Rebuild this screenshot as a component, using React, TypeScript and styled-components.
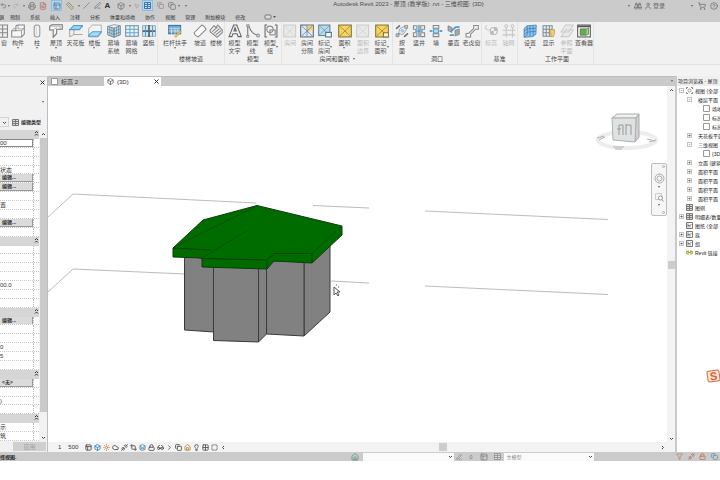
import React from "react";
import styled, { createGlobalStyle, css } from "styled-components";
import {
  Binoculars, Box as BoxIcon, Cloud, FileText, Filter, Glasses, Home, Lightbulb, Link2,
  PenLine, Printer, Redo2, Ruler, ShoppingCart, Sun, Undo2, User, CircleHelp, Copy,
  PanelsTopLeft, SquareDashed, Crop, Layers, Grid2x2, Lock, Unplug, MousePointer2, Slash, ChevronRight,
} from "lucide-react";

const Global = createGlobalStyle`
  * { box-sizing: border-box; }
  body {
    margin: 0;
    background: #fff;
    overflow: hidden;
    color: #333;
    font-family: "Liberation Sans", "Noto Sans CJK SC", sans-serif;
    font-size: 6px;
    line-height: 8px;
  }
  button, input, select {
    font: inherit;
    color: inherit;
    border: 0;
    padding: 0;
    margin: 0;
    background: none;
    border-radius: 0;
  }
  ul { list-style: none; margin: 0; padding: 0; }
  svg { display: block; flex: none; }
`;

const Shell = styled.div`
  display: flex;
  flex-direction: column;
  height: calc(100vh - 19px);
  min-height: 300px;
  position: relative;
  overflow: hidden;
`;

/* ---------- title bar and tabs ---------- */

const Header = styled.header`
  background: #cbcbcb;
  flex: none;
`;
const TitleRow = styled.div`
  display: flex;
  align-items: flex-start;
  height: 12px;
`;
const QuickBar = styled.div`
  display: flex;
  height: 11px;
`;
const Quick = styled.button<{ $w: number; $on?: boolean }>`
  width: ${(p) => p.$w}px;
  height: 11px;
  display: flex;
  align-items: center;
  justify-content: center;
  color: #666;
  ${(p) => p.$on && css`background: #b3d6ef; box-shadow: inset 0 0 0 1px #8fbbdc; color: #46688c;`}
`;
const BigA = styled.span`
  font-size: 8px;
  font-weight: 700;
  color: #333;
`;
const Title = styled.h1`
  flex: 1;
  margin: 0;
  text-align: center;
  font-size: 6px;
  line-height: 8px;
  font-weight: 400;
  color: #505050;
  white-space: nowrap;
`;
const Tabs = styled.nav`
  display: flex;
  align-items: center;
  height: 10px;
`;
const Tab = styled.button<{ $cut?: boolean }>`
  padding: 0 ${(p) => (p.$cut ? 1 : 5)}px 0 ${(p) => (p.$cut ? 0 : 5)}px;
  margin-left: ${(p) => (p.$cut ? -1 : 0)}px;
  font-size: 5px;
  white-space: nowrap;
  color: #333;
`;

/* ---------- ribbon ---------- */

const Ribbon = styled.div`
  display: flex;
  flex: none;
  height: 43px;
  background: #f1f1f1;
  border-bottom: 1px solid #e2e2e2;
`;
const Group = styled.section<{ $lead?: number }>`
  display: flex;
  flex-direction: column;
  justify-content: space-between;
  padding: 2px 0 1px ${(p) => p.$lead ?? 0}px;
  border-right: 1px solid #e4e4e4;
`;
const Tools = styled.div`
  display: flex;
  align-items: flex-start;
`;
const ToolButton = styled.button<{ $w: number }>`
  width: ${(p) => p.$w}px;
  display: flex;
  flex-direction: column;
  align-items: center;
  gap: 1px;
  line-height: 8px;
  white-space: nowrap;
  color: #505050;
  &:disabled { color: #bbb; }
  &:disabled svg { opacity: 0.35; }
`;
const ToolLabel = styled.span<{ $side?: boolean }>`
  display: flex;
  flex-direction: ${(p) => (p.$side ? "row" : "column")};
  align-items: center;
  white-space: pre-line;
  width: max-content;
`;
const Caret = styled.i`
  width: 0;
  border: 1px solid transparent;
  border-top: 2px solid #666;
  border-bottom: 0;
  flex: none;
`;
const GroupName = styled.div<{ $shift?: number }>`
  display: flex;
  align-items: center;
  justify-content: center;
  gap: 3px;
  height: 8px;
  padding-right: ${(p) => p.$shift ?? 0}px;
  color: #444;
  white-space: nowrap;
`;
const Options = styled.div`
  flex: none;
  height: 11px;
  background: #f3f3f3;
`;

/* ---------- workspace ---------- */

const Work = styled.main`
  flex: 1;
  min-height: 0;
  display: flex;
`;
const Properties = styled.aside`
  flex: none;
  width: 48px;
  display: flex;
  flex-direction: column;
  background: #f1f1f1;
  border-top: 1px solid #d4d4d4;
  border-right: 1px solid #bdbdbd;
`;
const PanelTop = styled.div`
  display: flex;
  flex-direction: column;
  justify-content: space-between;
  align-items: flex-end;
  height: 30px;
  padding: 1px 1px 1px 0;
`;
const Small = styled.button`
  width: 7px;
  height: 8px;
  display: flex;
  align-items: center;
  justify-content: center;
  color: #444;
`;
const TypeRow = styled.div`
  display: flex;
  align-items: center;
  height: 23px;
  gap: 3px;
  padding: 10px 4px 3px 0;
`;
const TypeDrop = styled.button`
  width: 9px;
  height: 10px;
  border: 1px solid #d5d5d5;
  border-left: 0;
  display: flex;
  align-items: center;
  justify-content: center;
`;
const EditType = styled.button`
  display: flex;
  align-items: center;
  gap: 2px;
  font-size: 5px;
  font-weight: 700;
  white-space: nowrap;
`;
const PropArea = styled.div`
  flex: 1;
  min-height: 0;
  display: flex;
`;
const PropList = styled.div`
  flex: 1;
  min-width: 0;
  display: grid;
  grid-auto-rows: 1fr;
  background: #fff;
`;
const PropRow = styled.div<{ $head?: boolean }>`
  display: grid;
  grid-template-columns: 34px 1fr;
  min-height: 0;
  overflow: hidden;
  white-space: nowrap;
  border-bottom: 1px ${(p) => (p.$head ? "solid #d4d4d4" : "dotted #c8c8c8")};
  ${(p) => p.$head && css`background: #d6d6d6;`}
`;
const Cell = styled.div<{ $head?: boolean }>`
  display: flex;
  align-items: center;
  min-width: 0;
  ${(p) => !p.$head && css`border-right: 1px dotted #bbb;`}
`;
const CellButton = styled.button`
  flex: 1;
  text-align: left;
  padding-left: 2px;
  background: #dadada;
  border: solid #999;
  border-width: 0 1px 1px 0;
  font-size: 5px;
  font-weight: 700;
  line-height: 7px;
`;
const CellInput = styled.input`
  width: 100%;
  height: 8px;
  border: 1px solid #888;
  border-left: 0;
`;
const VScroll = styled.div<{ $track: string }>`
  flex: none;
  width: 8px;
  display: flex;
  flex-direction: column;
  align-items: center;
  background: ${(p) => p.$track};
`;
const Thumb = styled.div<{ $grow: number; $shade: string }>`
  flex: ${(p) => p.$grow} 1 0;
  width: 7px;
  background: ${(p) => p.$shade};
`;
const Apply = styled.button`
  align-self: flex-end;
  width: 33px;
  height: 9px;
  margin: 1px 1px 1px 0;
  background: #cfcfcf;
  &:disabled { color: #a0a0a0; }
`;

const Center = styled.section`
  flex: 1;
  min-width: 0;
  display: flex;
  flex-direction: column;
`;
const DocTabs = styled.div`
  flex: none;
  display: flex;
  align-items: stretch;
  height: 10px;
  background: #cacaca;
  border-top: 1px solid #bdbdbd;
`;
const DocTab = styled.div<{ $on?: boolean }>`
  display: flex;
  align-items: center;
  gap: 3px;
  width: ${(p) => (p.$on ? 57 : 56)}px;
  padding: 0 1px 0 3px;
  background: ${(p) => (p.$on ? "#fff" : "#c6c6c6")};
`;
const DocName = styled.button`
  flex: 1;
  text-align: left;
  white-space: nowrap;
`;
const Spacer = styled.div`
  flex: 1;
`;
const ViewRow = styled.div`
  flex: 1;
  min-height: 0;
  display: flex;
`;
const Viewport = styled.div`
  flex: 1;
  min-width: 0;
  position: relative;
  overflow: hidden;
  background: #fff;
`;
const Cube = styled.div`
  position: absolute;
  top: 24px;
  right: 7px;
`;
const NavBar = styled.div`
  position: absolute;
  top: 77px;
  right: 0;
  width: 16px;
  height: 53px;
  border: 1px solid #bdbdbd;
  border-radius: 2px;
  background: #f6f6f6;
  display: flex;
  flex-direction: column;
  align-items: center;
  justify-content: space-between;
  color: #aaa;
`;
const NavButton = styled.button`
  display: flex;
  flex-direction: column;
  align-items: center;
  gap: 2px;
`;
const NavDot = styled.button`
  align-self: flex-end;
  width: 3px;
  height: 3px;
  margin: 1px;
  border: 1px solid #aaa;
  border-radius: 50%;
`;
const ViewBar = styled.div`
  flex: none;
  display: flex;
  align-items: center;
  height: 10px;
  background: #f3f3f3;
  padding-right: 8px;
`;
const Scale = styled.button`
  display: flex;
  gap: 7px;
  width: 36px;
  padding-left: 10px;
  white-space: nowrap;
`;
const ViewTool = styled.button<{ $c?: string }>`
  width: 9px;
  height: 9px;
  display: flex;
  align-items: center;
  justify-content: center;
  color: ${(p) => p.$c ?? "#555"};
`;
const HTrack = styled.div`
  flex: 1;
  display: flex;
`;
const HThumb = styled.div`
  width: 8px;
  height: 8px;
  background: #cdcdcd;
`;

/* ---------- project browser ---------- */

const Browser = styled.aside`
  flex: none;
  width: 45px;
  overflow: hidden;
  border-left: 2px solid #c9c9c9;
  background: #fff;
  white-space: nowrap;
`;
const BrowserTitle = styled.h2`
  margin: 0;
  padding-left: 1px;
  height: 10px;
  font-size: 5px;
  line-height: 10px;
  font-weight: 400;
  background: #efefef;
`;
const Node = styled.li<{ $depth: number }>`
  display: flex;
  align-items: center;
  gap: 2px;
  height: 9px;
  font-size: 5px;
  color: #222;
  padding-left: ${(p) => [2, 10, 26][p.$depth]}px;
`;
const Toggle = styled.button`
  width: 5px;
  height: 5px;
  border: 1px solid #c4c4c4;
  font-size: 5px;
  line-height: 3px;
  flex: none;
`;
const Blank = styled.span<{ $w: number }>`
  width: ${(p) => p.$w}px;
  flex: none;
`;

/* ---------- status bar ---------- */

const Status = styled.footer`
  flex: none;
  display: flex;
  align-items: center;
  height: 9px;
  background: #cbcbcb;
  font-size: 5px;
`;
const StatusText = styled.span`
  flex: 349 1 0;
  min-width: 0;
  color: #222;
  font-weight: 700;
`;
const SelectBox = styled.label`
  flex: 90 1 0;
  min-width: 0;
  height: 8px;
  display: flex;
  align-items: center;
  background: #fafafa;
  padding-right: 1px;
`;
const StatusSelect = styled.select`
  flex: 1;
  min-width: 0;
  height: 8px;
  color: #888;
  appearance: none;
  padding-left: 3px;
`;
const StatusIcon = styled.button<{ $w: number; $c?: string }>`
  width: ${(p) => p.$w}px;
  display: flex;
  align-items: center;
  justify-content: center;
  color: ${(p) => p.$c ?? "#777"};
`;
const StatusGap = styled.span`
  flex: 79 1 0;
`;
const InputBadge = styled.button`
  position: absolute;
  right: 0;
  bottom: 79px;
  width: 13px;
  height: 12px;
  border-radius: 2px;
  border: 1px solid #d96a3c;
  background: #fbe6dc;
  color: #dd5f2d;
  font-size: 11px;
  line-height: 10px;
  font-weight: 700;
  transform: rotate(-8deg);
`;

/* ---------- icons ---------- */

const G = "#888";
const B = "#4d9fd0";
const Y = "#f7d45c";
const boxX = (
  <>
    <rect x="2" y="3" width="36" height="34" fill={Y} stroke="#7d7340" strokeWidth="3" />
    <path d="M4 5 36 35M36 5 4 35" stroke="#8a7d3a" strokeWidth="2" />
  </>
);
const art: Record<string, React.ReactNode> = {
  window: <path d="M2 3H30V38H2ZM2 14H30M2 25H30M16 3V38" fill="#eee" stroke={G} strokeWidth="3" />,
  component: <><path d="M2 19H14V8Q14 3 20 3H38V29L30 37H2Z" fill="#f6f6f6" stroke={G} strokeWidth="3" /><path d="M2 19 8 13H14M14 19H30V37M30 19 38 12M20 3V14H38" fill="none" stroke={G} strokeWidth="2" /></>,
  column: <><rect x="12" y="3" width="16" height="34" rx="7" fill="#f3f3f3" stroke="#999" strokeWidth="3" /><path d="M18 7V33" stroke="#ccc" strokeWidth="2" /></>,
  roof: <><path d="M2 6 8 2H38V15H22V27L12 38V17H2Z" fill="#f6f6f6" stroke="#777" strokeWidth="3" /><path d="M2 6H32V15M12 17 22 10" fill="none" stroke="#999" strokeWidth="2" /></>,
  ceiling: <><path d="M2 16 14 4H39L30 16Z" fill="#9bd0ee" stroke={B} strokeWidth="3" /><path d="M2 16V37M14 16V30H39M2 37 14 30M39 6V10" fill="none" stroke={G} strokeWidth="2" /></>,
  floor: <><path d="M12 3H38V26L28 37H2V14Z" fill="#f4f4f4" stroke="#999" strokeWidth="2" /><path d="M2 32 13 22H38L28 35H2Z" fill="#a6dbf5" stroke={B} strokeWidth="3" /></>,
  curtain: <><path d="M2 7 20 12V38L2 31ZM20 12 38 5V31L20 38Z" fill="#c4e4f5" stroke="#667f8e" strokeWidth="2.5" /><path d="M2 15 20 21 38 14M2 23 20 30 38 23M8 9V33M14 10V35M27 9V35M33 7V33M2 7 20 2 38 5" fill="none" stroke="#667f8e" strokeWidth="2" /></>,
  grid: <><rect x="2" y="5" width="36" height="30" fill="#e8f4fa" stroke="#7a8b94" strokeWidth="3" /><path d="M14 5V35M26 5V35M2 15H38M2 25H38" stroke={B} strokeWidth="2.5" /></>,
  mullion: <><rect x="2" y="5" width="36" height="30" fill="#cfe8f5" stroke="#7a8b94" strokeWidth="2" /><path d="M20 3V37M2 20H38" stroke="#58646b" strokeWidth="5" /><path d="M10 5V35M30 5V35" stroke={B} strokeWidth="3" /></>,
  railing: <><rect x="2" y="4" width="34" height="24" fill="#6da9d3" stroke="#456f91" strokeWidth="3" /><path d="M2 12H36M2 20H36M10 12V32M20 12V32M28 12V28" stroke="#dceaf3" strokeWidth="2" /><path d="M18 36 35 19 39 23 23 38Z" fill="#e8c34c" stroke="#99824a" strokeWidth="1" /></>,
  ramp: <path d="M3 25 25 3Q36 8 37 16L15 37Q5 34 3 25Z" fill="#fafafa" stroke={G} strokeWidth="3" />,
  stair: <path d="M3 18 14 5 20 10 25 3 38 17V24L23 38 3 22ZM9 22 24 9M14 27 30 13M19 32 35 18" fill="#eee" stroke={G} strokeWidth="3" />,
  letter: <path d="M3 36 16 3H25L38 36H29L26 28H14L11 36ZM17 20H24L20 10Z" fill="#f3f3f3" stroke="#666" strokeWidth="3" />,
  curve: <><path d="M5 5V36M9 7Q15 29 36 33" fill="none" stroke="#777" strokeWidth="3" /><path d="M2 2H9V8H2ZM2 32H8V38H2ZM31 29H38V37H31Z" fill="#ddd" stroke="#777" strokeWidth="2" /></>,
  group: <><path d="M9 3H3V37H9M31 3H37V37H31" fill="none" stroke="#666" strokeWidth="3" /><circle cx="17" cy="15" r="9" fill="#f4f4f4" stroke={G} strokeWidth="3" /><rect x="17" y="17" width="15" height="14" fill="none" stroke={G} strokeWidth="3" /></>,
  room: <><rect x="2" y="3" width="34" height="34" fill="#ddd" stroke={G} strokeWidth="3" /><path d="M4 5 34 35M34 5 4 35" stroke={G} strokeWidth="2" /></>,
  separator: <><rect x="2" y="3" width="36" height="34" fill="#dce9f7" stroke="#62676d" strokeWidth="3" /><path d="M20 5H36V16L20 24Z" fill={Y} /><path d="M4 5 36 35M36 5 4 35M20 3V37" stroke="#6e8bb3" strokeWidth="2.5" /></>,
  tagRoom: <><rect x="2" y="3" width="32" height="30" fill="#b9dbef" stroke="#67808e" strokeWidth="3" /><path d="M3 4 34 32M34 4 3 32" stroke="#5b93b5" strokeWidth="2" /><rect x="22" y="24" width="16" height="13" fill="#fff" stroke="#47728e" strokeWidth="3" /></>,
  area: boxX,
  tagArea: <>{boxX}<rect x="24" y="25" width="15" height="12" fill="#fff3bd" stroke="#7d7340" strokeWidth="3" /></>,
  byFace: <><path d="M14 13 28 6 34 14 22 31 10 26Z" fill="#e4eaee" stroke={G} strokeWidth="2" /><path d="M3 14 14 4M26 37 37 27M5 34 12 28" stroke="#777" strokeWidth="5" /><path d="M28 4H36V12H28ZM3 28H11V36H3Z" fill="#ccc" stroke="#777" strokeWidth="2" /><circle cx="21" cy="19" r="5" fill="#9cc9e5" /></>,
  shaft: <><path d="M4 5V15H14V5ZM25 5V15H36V5ZM4 25V36H14V25ZM25 25V36H36V25Z" fill="#eee" stroke={G} strokeWidth="3" /><path d="M20 2V38M9 20H31" stroke={B} strokeWidth="4" /></>,
  wall: <><path d="M12 4H28V12H12ZM12 28H28V36H12Z" fill="#eee" stroke={G} strokeWidth="3" /><path d="M13 14H27V26H13Z" fill="#b7def5" stroke={B} strokeWidth="3" /><path d="M2 20H10M30 20H38" stroke="#4f83a7" strokeWidth="4" /></>,
  vertical: <><path d="M3 5 14 10V24L3 19ZM23 18 35 14V30L23 34Z" fill="#aaa" stroke="#777" strokeWidth="2" /><path d="M12 20 25 9 36 8M8 32H20" fill="none" stroke={B} strokeWidth="5" /></>,
  dormer: <path d="M3 37V27H10L25 13V4H38V15H30L16 29V37Z" fill="#f7f7f7" stroke={G} strokeWidth="3" />,
  level: <><path d="M2 12 12 17H24M8 4 3 12" fill="none" stroke={G} strokeWidth="3" /><circle cx="28" cy="20" r="10" fill="#fff" stroke="#555" strokeWidth="3" /><path d="M28 10V30H18V20H38V10Z" fill="#555" /></>,
  axes: <><path d="M12 9V38M30 9V38M2 18H38M2 31H38" stroke="#777" strokeWidth="3" /><circle cx="12" cy="6" r="4" fill="#fff" stroke="#777" strokeWidth="3" /><circle cx="30" cy="6" r="4" fill="#fff" stroke="#777" strokeWidth="3" /></>,
  plane: <path d="M3 13 12 5 38 3 37 29 28 36 3 38ZM3 21 12 14 37 12M3 30 12 23 37 21M12 5V31L3 38M20 5V36M29 4V35" fill="#8cc4ee" stroke="#3978ad" strokeWidth="2" />,
  show: <><path d="M3 5H29V35H3ZM3 15H29M3 25H29M12 5V35M21 5V35" fill="#eaf2f7" stroke="#7e8a91" strokeWidth="3" /><path d="M23 16H36V27L33 36H26V27H23Z" fill="#f4ce64" stroke="#bd9b48" strokeWidth="2" /></>,
  refPlane: <path d="M3 23 16 3H38L25 23ZM3 36 16 17H38L25 36Z" fill="#ddd" stroke={G} strokeWidth="3" />,
  viewer: <><rect x="2" y="3" width="36" height="34" fill="#fff" stroke="#555" strokeWidth="3" /><path d="M2 7H38" stroke="#555" strokeWidth="5" /><path d="M9 14H27V32H9Z" fill="#69a94f" stroke="#427337" strokeWidth="2" /><path d="M27 14 33 12V29L27 32" fill="#a7cf96" stroke="#427337" strokeWidth="2" /></>,
};
const RibbonIcon = ({ name }: { name: string }) => (
  <svg width="14" height="14" viewBox="0 0 40 40" aria-hidden="true">{art[name]}</svg>
);
const Chevron = ({ turn = 0 }: { turn?: number }) => (
  <svg width="5" height="5" viewBox="0 0 10 10" aria-hidden="true">
    <path d="M2 4 5 7 8 4" fill="none" stroke="#444" strokeWidth="2" transform={`rotate(${turn} 5 5)`} />
  </svg>
);
const Collapse = () => (
  <svg width="5" height="7" viewBox="0 0 10 14" aria-hidden="true">
    <path d="M2 6 5 3 8 6M2 11 5 8 8 11" fill="none" stroke="#333" strokeWidth="2" />
  </svg>
);
const Cross = () => (
  <svg width="5" height="5" viewBox="0 0 10 10" aria-hidden="true">
    <path d="M1 1 9 9M9 1 1 9" stroke="#333" strokeWidth="2" />
  </svg>
);
const Sheet = ({ tone = "#aaa" }: { tone?: string }) => (
  <svg width="7" height="7" viewBox="0 0 14 14" aria-hidden="true">
    <path d="M1 1H13V13H1Z" fill="#fff" stroke={tone} strokeWidth="2" />
  </svg>
);
const ViewMark = () => (
  <svg width="7" height="7" viewBox="0 0 14 14" aria-hidden="true">
    <path d="M1 4V1H4M10 1H13V4M13 10V13H10M4 13H1V10" fill="none" stroke="#888" strokeWidth="2" />
    <circle cx="7" cy="7" r="3" fill="none" stroke="#999" strokeWidth="2" />
  </svg>
);
const FamilyMark = () => (
  <svg width="7" height="7" viewBox="0 0 14 14" aria-hidden="true">
    <path d="M1 1H13V13H1Z" fill="#fff" stroke="#777" strokeWidth="2" />
    <path d="M4 3V11M4 7H8V11M8 7 11 4" fill="none" stroke="#777" strokeWidth="2" />
  </svg>
);
const TableMark = ({ tone = "#777" }: { tone?: string }) => (
  <svg width="7" height="7" viewBox="0 0 14 14" aria-hidden="true">
    <path d="M1 1H13V13H1ZM1 5H13M1 9H13M7 1V13" fill="#ddd" stroke={tone} strokeWidth="2" />
  </svg>
);

/* ---------- data ---------- */

type Tool = { w: number; icon: string; label: string; menu?: "below" | "side"; off?: boolean };
const groups: { name: string; lead?: number; shift?: number; menu?: boolean; tools: Tool[] }[] = [
  { name: "构建", shift: 45, tools: [
    { w: 8, icon: "window", label: "窗" },
    { w: 20, icon: "component", label: "构件", menu: "below" },
    { w: 18, icon: "column", label: "柱", menu: "below" },
    { w: 20, icon: "roof", label: "屋顶", menu: "below" },
    { w: 19, icon: "ceiling", label: "天花板" },
    { w: 19, icon: "floor", label: "楼板", menu: "below" },
    { w: 19, icon: "curtain", label: "幕墙\n系统" },
    { w: 17, icon: "grid", label: "幕墙\n网格" },
    { w: 17, icon: "mullion", label: "竖梃" },
  ] },
  { name: "楼梯坡道", tools: [
    { w: 34, icon: "railing", label: "栏杆扶手", menu: "below" },
    { w: 16, icon: "ramp", label: "坡道" },
    { w: 16, icon: "stair", label: "楼梯" },
  ] },
  { name: "模型", tools: [
    { w: 19, icon: "letter", label: "模型\n文字" },
    { w: 17, icon: "curve", label: "模型\n线" },
    { w: 20, icon: "group", label: "模型\n组", menu: "side" },
  ] },
  { name: "房间和面积", menu: true, tools: [
    { w: 16, icon: "room", label: "房间", off: true },
    { w: 18, icon: "separator", label: "房间\n分隔" },
    { w: 18, icon: "tagRoom", label: "标记\n房间", menu: "side" },
    { w: 21, icon: "area", label: "面积", menu: "below" },
    { w: 16, icon: "room", label: "面积\n边界", off: true },
    { w: 21, icon: "tagArea", label: "标记\n面积", menu: "side" },
  ] },
  { name: "洞口", tools: [
    { w: 18, icon: "byFace", label: "按\n面" },
    { w: 16, icon: "shaft", label: "竖井" },
    { w: 18, icon: "wall", label: "墙" },
    { w: 17, icon: "vertical", label: "垂直" },
    { w: 19, icon: "dormer", label: "老虎窗" },
  ] },
  { name: "基准", tools: [
    { w: 18, icon: "level", label: "标高", off: true },
    { w: 17, icon: "axes", label: "轴网", off: true },
  ] },
  { name: "工作平面", lead: 3, tools: [
    { w: 18, icon: "plane", label: "设置", menu: "below" },
    { w: 19, icon: "show", label: "显示" },
    { w: 17, icon: "refPlane", label: "参照\n平面", off: true },
    { w: 18, icon: "viewer", label: "查看器" },
  ] },
];

const tabs = ["预制", "系统", "插入", "注释", "分析", "体量和场地", "协作", "视图", "管理", "附加模块", "修改"];

type Prop = { kind?: "head" | "edit" | "none" | "input"; text?: string };
const properties: Prop[] = [
  { kind: "head" }, { kind: "input" }, {}, {}, { text: "状态" }, { kind: "edit" }, { kind: "edit" },
  {}, { text: "置" }, {}, { kind: "edit" }, {}, { kind: "head" }, {}, {}, {}, {}, { text: "00.0" }, {}, {},
  { kind: "head" }, { kind: "edit" }, {}, {}, { text: "0" }, { text: "5" }, {}, { kind: "head" },
  { kind: "none" }, {}, { text: ")" }, {}, { kind: "head" }, { text: "示" }, { text: "筑" },
];

type Mark = "view" | "sheet" | "table" | "link" | "family";
const marks: Record<Mark, React.ReactNode> = {
  view: <ViewMark />,
  sheet: <Sheet tone="#999" />,
  table: <TableMark />,
  family: <FamilyMark />,
  link: <Link2 size={7} color="#a5a020" strokeWidth={4} />,
};
const nodes: { d: number; t: string; open?: boolean; mark?: Mark; leaf?: boolean }[] = [
  { d: 0, t: "视图 (全部", open: true, mark: "view" },
  { d: 1, t: "楼层平面", open: true },
  { d: 2, t: "场地", mark: "sheet", leaf: true },
  { d: 2, t: "标高", mark: "sheet", leaf: true },
  { d: 2, t: "标高", mark: "sheet", leaf: true },
  { d: 1, t: "天花板平面" },
  { d: 1, t: "三维视图", open: true },
  { d: 2, t: "{3D}", mark: "sheet", leaf: true },
  { d: 1, t: "立面 (建筑" },
  { d: 1, t: "面积平面" },
  { d: 1, t: "面积平面" },
  { d: 1, t: "面积平面" },
  { d: 1, t: "面积平面" },
  { d: 0, t: "图例", mark: "table", leaf: true },
  { d: 0, t: "明细表/数量", mark: "table" },
  { d: 0, t: "图纸 (全部", mark: "family", leaf: true },
  { d: 0, t: "族", mark: "family" },
  { d: 0, t: "组", mark: "family" },
  { d: 0, t: "Revit 链接", mark: "link", leaf: true },
];

const viewTools: [React.ElementType, string?][] = [
  [PanelsTopLeft], [BoxIcon, "#2f83c0"], [Sun, "#d18a3c"], [Cloud], [Unplug], [Crop], [Layers, "#4b88b5"],
  [Lock], [Glasses], [ChevronRight], [Copy], [Home, "#b28a3c"], [Lightbulb], [Grid2x2], [SquareDashed],
];

/* ---------- drawing ---------- */

const Model = () => (
  <svg width="619" height="356" viewBox="48 86 619 356" role="img" aria-label="三维模型">
    <g fill="none" stroke="#bcbcbc" strokeWidth="1">
      <path d="M48 217 73 194 256 203M313 205.500 369 208M425 211 608 219.500" />
      <path d="M48 292 73 269 185 274M331 281 369 283M425 286 608 294.500" />
    </g>
    <g fill="#818181" stroke="#3a3a3a" strokeWidth="1" strokeLinejoin="round">
      <path d="M184.500 254 214 262V332L184.500 330Z" />
      <path d="M304 258 330 240V312L304 336Z" />
      <path d="M266.500 262 304 258V336L266.500 334Z" />
      <path d="M258.500 264 266.500 262V334L258.500 342Z" />
      <path d="M213.500 264H258.500V342L213.500 340.500Z" />
    </g>
    <g fill="#006c00" stroke="#0b3d0b" strokeWidth="1" strokeLinejoin="round">
      <path d="M173 248 203 220 257 205.500 342 226V235L312 263 274 261 267 269 202 267V258L173 257Z" />
      <path d="M173 248 211 250M202 258.500 267 260 274 253.500H312M267 260V269M312 253.500V263" fill="none" />
      <path d="M312 253.500 342 226M202 258 248 230M178 245 196 236 257 206" fill="none" stroke="#085208" />
    </g>
    <path d="M334 287V295L336 293 338 296 339 295 337 292H340Z" fill="#fff" stroke="#555" strokeWidth="1" />
    <path d="M336 285H337M338 287H339" stroke="#555" />
  </svg>
);

const ViewCube = () => (
  <svg width="64" height="44" viewBox="597 110 64 44" role="img" aria-label="视图方位">
    <ellipse cx="628" cy="140" rx="29" ry="8" fill="none" stroke="#ededed" strokeWidth="4" />
    <path d="M613 118 618 114H640L637 118Z" fill="#f1f1f1" stroke="#aaa" />
    <path d="M637 118 640 114 640 137 636 142Z" fill="#d0d0d0" stroke="#aaa" />
    <path d="M613 118H637L636 142 614 140Z" fill="#dfe2e3" stroke="#b0b0b0" />
    <path d="M620 125V135M620 125H624V135M627 124V135M627 125H632V135M618 129H622" fill="none" stroke="#999" />
    <path d="M598 138 605 136M600 140 606 137M648 139 656 141M650 142 657 140M614 147H625M616 149H623" stroke="#b0b0b0" fill="none" />
  </svg>
);

export default function App() {
  return (
    <>
      <Global />
      <Shell>
        <Header>
          <TitleRow>
            <QuickBar>
              <Quick $w={7} aria-label="放弃"><Undo2 size={7} /></Quick>
              <Quick $w={3} aria-label="放弃列表"><Caret /></Quick>
              <Quick $w={11} aria-label="重做" disabled><Redo2 size={7} color="#aaa" /></Quick>
              <Quick $w={6} aria-label="重做列表"><Caret /></Quick>
              <Quick $w={10} aria-label="打印"><Printer size={8} /></Quick>
              <Quick $w={11} aria-label="导出"><FileText size={8} color="#a66" /></Quick>
              <Blank $w={3} />
              <Quick $w={11} $on aria-label="对齐"><PanelsTopLeft size={8} /></Quick>
              <Quick $w={15} aria-label="测量"><Ruler size={8} color="#8d7a35" /></Quick>
              <Quick $w={3} aria-label="测量列表"><Caret /></Quick>
              <Quick $w={12} aria-label="尺寸标注"><Slash size={7} /></Quick>
              <Quick $w={10} aria-label="标记"><PenLine size={7} /></Quick>
              <Quick $w={11} aria-label="文字"><BigA>A</BigA></Quick>
              <Quick $w={15} aria-label="三维"><BoxIcon size={8} /></Quick>
              <Quick $w={3} aria-label="三维列表"><Caret /></Quick>
              <Quick $w={11} aria-label="剖面"><MousePointer2 size={6} color="#999" /></Quick>
              <Quick $w={11} $on aria-label="细线"><TableMark tone="#3478b4" /></Quick>
              <Quick $w={15} aria-label="关闭隐藏"><Copy size={7} color="#977" /></Quick>
              <Quick $w={8} aria-label="切换窗口"><Copy size={8} /></Quick>
              <Quick $w={5} aria-label="窗口列表"><Caret /></Quick>
              <Quick $w={10} aria-label="自定义"><Caret /></Quick>
            </QuickBar>
            <Title>Autodesk Revit 2023 - 屋顶 (教学版) .rvt - 三维视图: {"{3D}"}</Title>
            <QuickBar>
              <Quick $w={6} aria-label="展开"><Caret /></Quick>
              <Quick $w={11} aria-label="搜索"><Binoculars size={8} /></Quick>
              <Quick $w={10} aria-label="用户"><User size={8} /></Quick>
              <Quick $w={12}>登录</Quick>
              <Blank $w={24} />
              <Quick $w={6} aria-label="用户列表"><Caret /></Quick>
              <Quick $w={13} aria-label="商店"><ShoppingCart size={8} /></Quick>
              <Quick $w={12} aria-label="帮助"><CircleHelp size={8} /></Quick>
            </QuickBar>
          </TitleRow>
          <Tabs>
            <Tab $cut>钢</Tab>
            {tabs.map((t) => <Tab key={t}>{t}</Tab>)}
            <Blank $w={10} />
            <Quick $w={20} aria-label="显示模式">
              <svg width="12" height="6" viewBox="0 0 12 6"><rect x="1" y="1" width="6" height="4" rx="1" fill="#ddd" stroke="#777" /><path d="M9 2H12L10.500 4Z" fill="#555" /></svg>
            </Quick>
          </Tabs>
        </Header>

        <Ribbon>
          {groups.map((g) => (
            <Group key={g.name} $lead={g.lead}>
              <Tools>
                {g.tools.map((t, i) => (
                  <ToolButton key={i} $w={t.w} disabled={t.off}>
                    <RibbonIcon name={t.icon} />
                    <ToolLabel $side={t.menu === "side"}>{t.label}{t.menu && <Caret />}</ToolLabel>
                  </ToolButton>
                ))}
              </Tools>
              <GroupName $shift={g.shift}>{g.name}{g.menu && <Caret />}</GroupName>
            </Group>
          ))}
        </Ribbon>
        <Options />

        <Work>
          <Properties>
            <PanelTop>
              <Small aria-label="关闭属性"><Cross /></Small>
              <Small aria-label="类型列表"><Caret /></Small>
            </PanelTop>
            <TypeRow>
              <TypeDrop aria-label="选择类型"><Chevron /></TypeDrop>
              <EditType><TableMark />编辑类型</EditType>
            </TypeRow>
            <PropArea>
              <PropList>
                {properties.map((p, i) => (
                  <PropRow key={i} $head={p.kind === "head"}>
                    <Cell $head={p.kind === "head"}>
                      {p.kind === "edit" && <CellButton>编辑...</CellButton>}
                      {p.kind === "none" && <CellButton>&lt;无&gt;</CellButton>}
                      {p.kind === "input" && <CellInput aria-label="视图比例" defaultValue="00" />}
                      {p.text}
                    </Cell>
                    {p.kind === "head" && <Collapse />}
                  </PropRow>
                ))}
              </PropList>
              <VScroll $track="#f1f1f1">
                <Small aria-label="向上"><Chevron turn={180} /></Small>
                <Thumb $grow={273} $shade="#cacaca" />
                <Thumb $grow={21} $shade="#f1f1f1" />
                <Small aria-label="向下"><Chevron /></Small>
              </VScroll>
            </PropArea>
            <Apply disabled>应用</Apply>
          </Properties>

          <Center>
            <DocTabs>
              <DocTab><Sheet tone="#999" /><DocName>标高 2</DocName></DocTab>
              <DocTab $on><BoxIcon size={7} /><DocName>{"{3D}"}</DocName><Small aria-label="关闭视图"><Cross /></Small></DocTab>
              <Spacer />
              <Small aria-label="视图列表"><Caret /></Small>
            </DocTabs>
            <ViewRow>
              <Viewport>
                <Model />
                <Cube><ViewCube /></Cube>
                <NavBar>
                  <NavDot aria-label="关闭导航栏" />
                  <NavButton aria-label="控制盘">
                    <svg width="11" height="11" viewBox="0 0 22 22"><circle cx="11" cy="11" r="9" fill="none" stroke="#aaa" strokeWidth="2" /><circle cx="11" cy="11" r="5" fill="none" stroke="#aaa" strokeWidth="2" /></svg>
                    <Caret />
                  </NavButton>
                  <NavButton aria-label="缩放">
                    <svg width="9" height="9" viewBox="0 0 18 18"><path d="M1 1H13V13H1Z" fill="none" stroke="#ccc" strokeWidth="2" /><circle cx="11" cy="10" r="4" fill="#fff" stroke="#999" strokeWidth="2" /><path d="M14 13 17 17" stroke="#999" strokeWidth="2" /></svg>
                    <Caret />
                  </NavButton>
                  <NavDot aria-label="导航栏选项" />
                </NavBar>
              </Viewport>
              <VScroll $track="#f3f3f3">
                <Small aria-label="向上"><Chevron turn={180} /></Small>
                <Thumb $grow={167} $shade="#f3f3f3" />
                <Thumb $grow={8} $shade="#cdcdcd" />
                <Thumb $grow={165} $shade="#f3f3f3" />
                <Small aria-label="向下"><Chevron /></Small>
              </VScroll>
            </ViewRow>
            <ViewBar>
              <Scale><span>1</span><span>500</span></Scale>
              {viewTools.map(([I, c], i) => (
                <ViewTool key={i} $c={c} aria-label={`视图控制 ${i + 1}`}><I size={7} strokeWidth={3} /></ViewTool>
              ))}
              <ViewTool aria-label="向左"><Chevron turn={90} /></ViewTool>
              <HTrack>
                <Spacer />
                <HThumb />
                <Spacer />
              </HTrack>
              <ViewTool aria-label="向右"><Chevron turn={270} /></ViewTool>
            </ViewBar>
          </Center>

          <Browser>
            <BrowserTitle>项目浏览器 - 屋顶</BrowserTitle>
            <ul>
              {nodes.map((n, i) => (
                <Node key={i} $depth={n.d}>
                  {n.leaf ? n.d === 0 && <Blank $w={5} /> : <Toggle aria-label={n.open ? "收起" : "展开"}>{n.open ? "-" : "+"}</Toggle>}
                  {n.mark && marks[n.mark]}
                  {n.d === 1 && <Blank $w={2} />}
                  <span>{n.t}</span>
                </Node>
              ))}
            </ul>
          </Browser>
        </Work>

        <Status>
          <StatusText>择视图.</StatusText>
          <StatusIcon $w={15} $c="#3c8a78" aria-label="工作集"><Home size={8} /></StatusIcon>
          <SelectBox><StatusSelect aria-label="活动工作集"><option></option></StatusSelect><Chevron /></SelectBox>
          <StatusIcon $w={11} aria-label="可编辑"><PenLine size={6} /></StatusIcon>
          <StatusIcon $w={12}>:0</StatusIcon>
          <StatusIcon $w={15} aria-label="设计选项"><PanelsTopLeft size={8} /></StatusIcon>
          <StatusIcon $w={12} aria-label="选项集"><TableMark tone="#999" /></StatusIcon>
          <SelectBox><StatusSelect aria-label="设计选项"><option>主模型</option></StatusSelect><Chevron /></SelectBox>
          <StatusGap />
          <StatusIcon $w={12} $c="#b07a3c" aria-label="选择链接"><Filter size={7} /></StatusIcon>
          <StatusIcon $w={12} $c="#a55" aria-label="选择基线"><Unplug size={7} /></StatusIcon>
          <StatusIcon $w={11} $c="#c0553c" aria-label="选择锁定图元"><Lock size={7} /></StatusIcon>
          <StatusIcon $w={12} $c="#4a7fae" aria-label="按面选择"><Copy size={7} /></StatusIcon>
        </Status>
        <InputBadge aria-label="输入法">S</InputBadge>
      </Shell>
    </>
  );
}
